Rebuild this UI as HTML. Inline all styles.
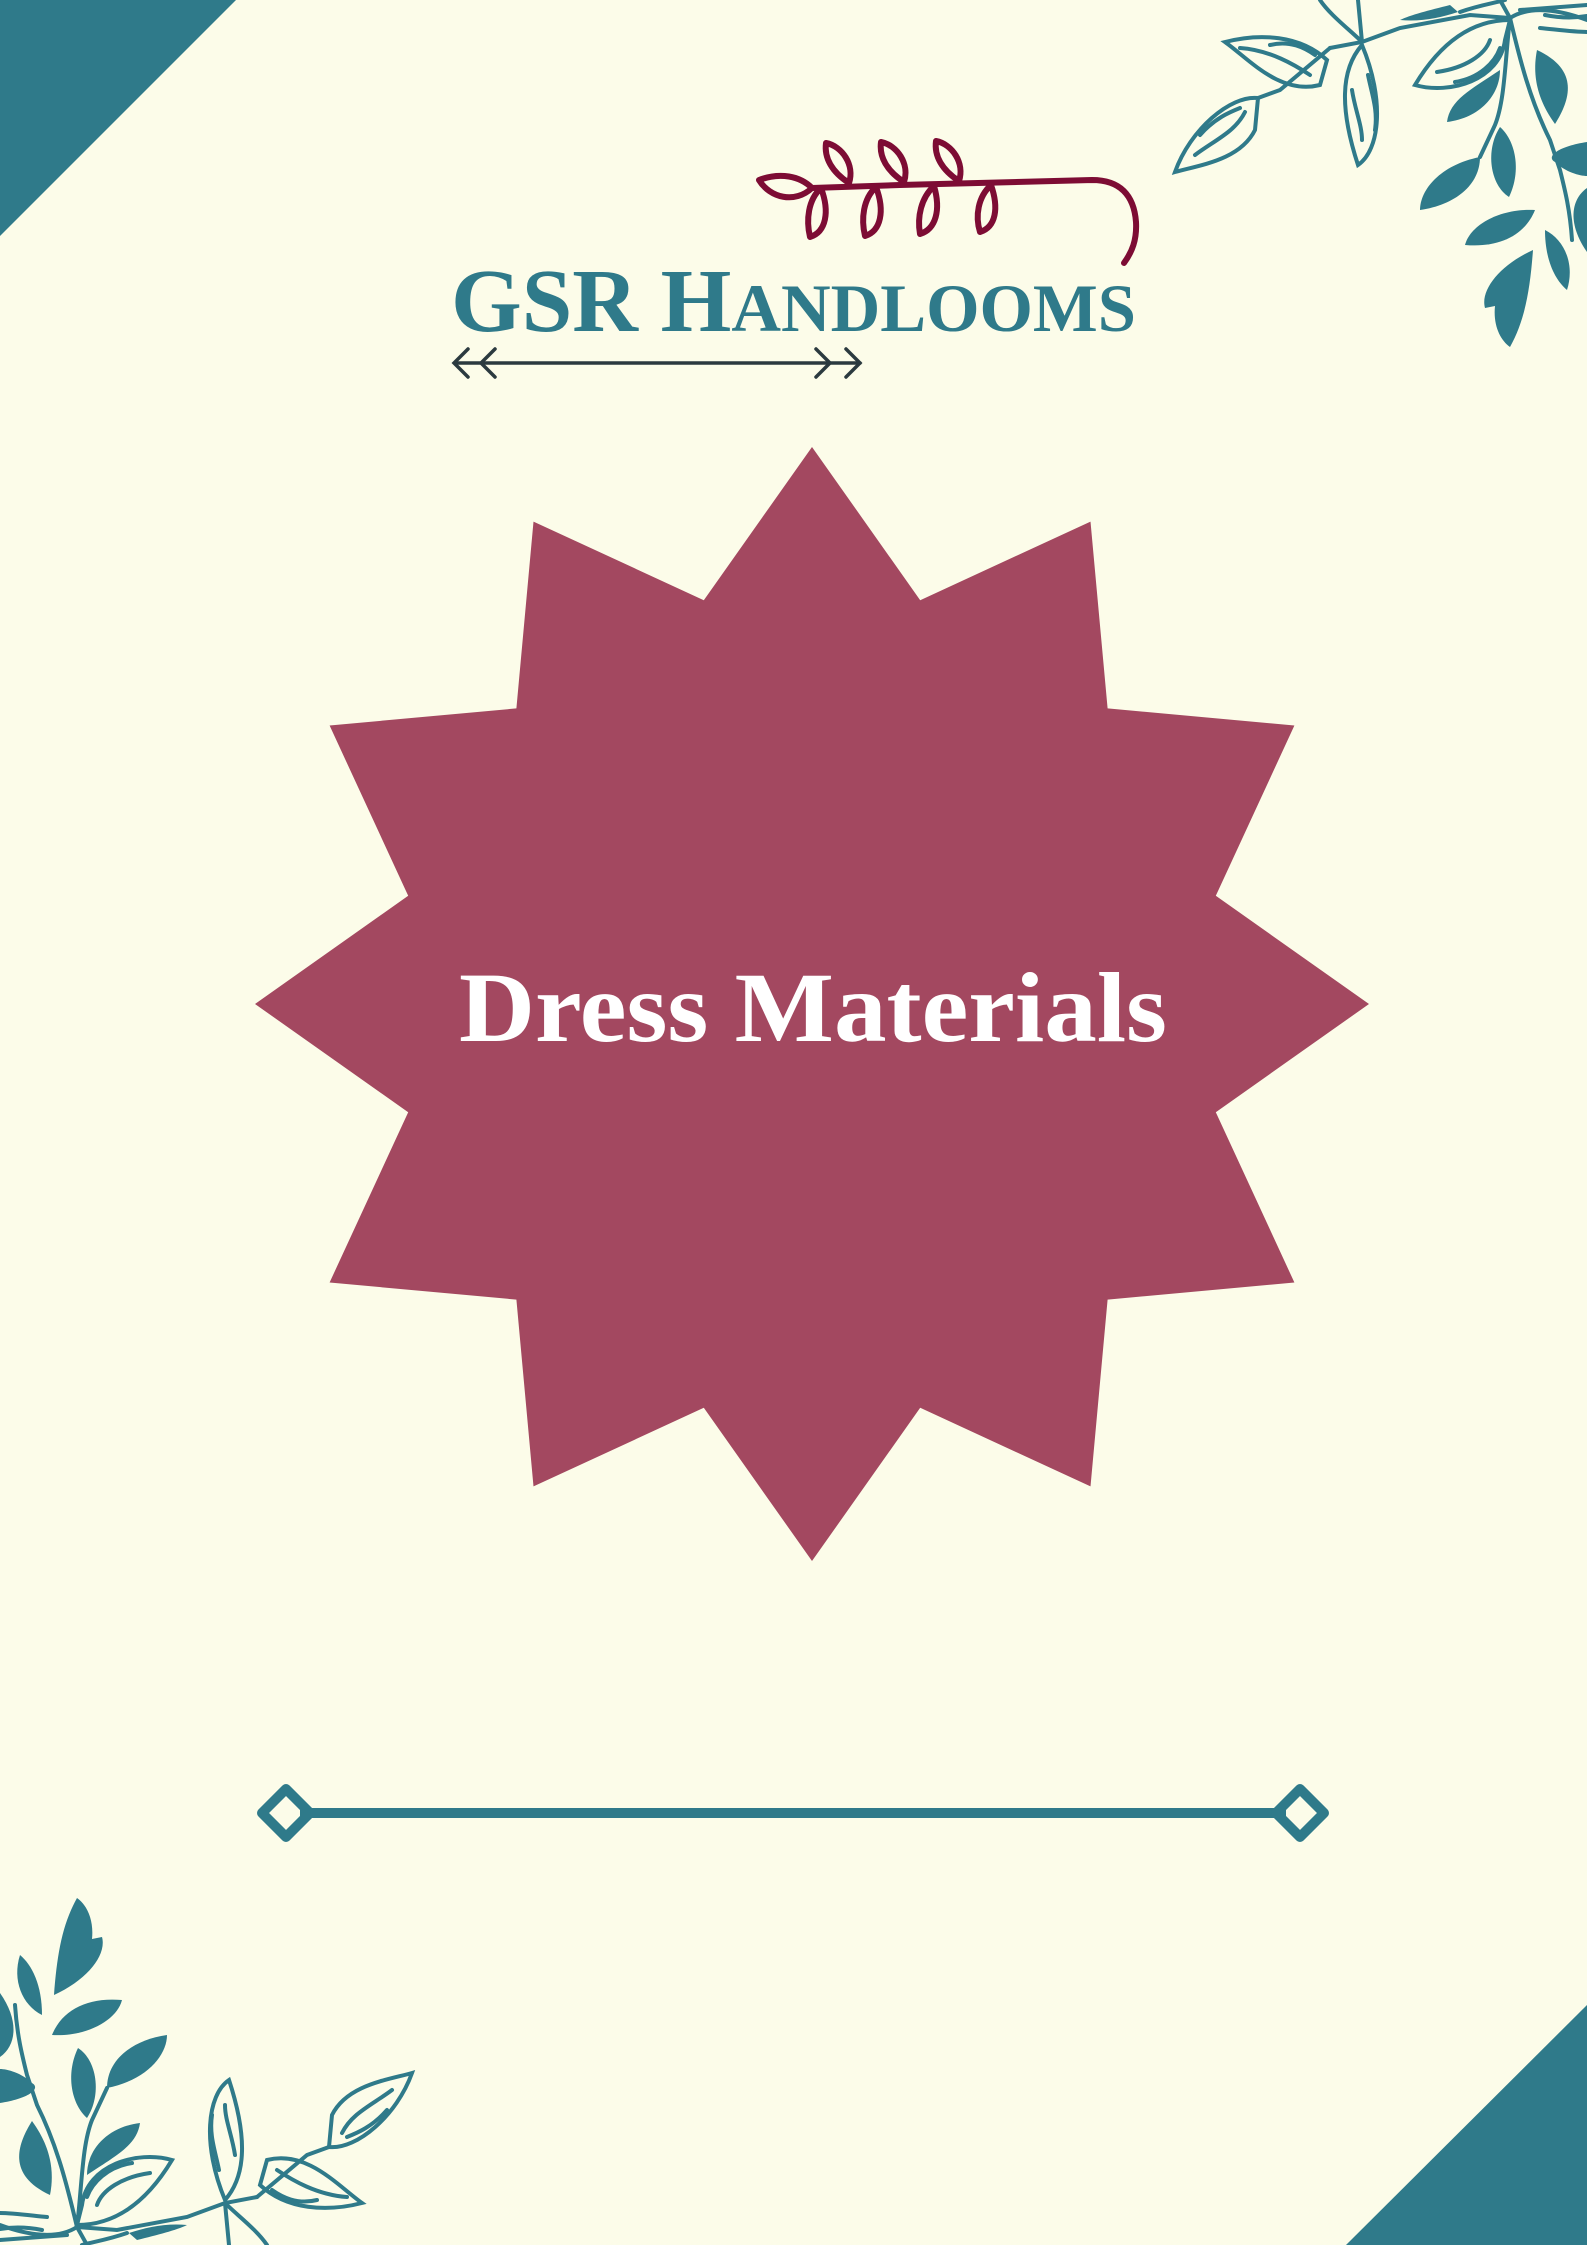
<!DOCTYPE html>
<html><head><meta charset="utf-8"><style>
html,body{margin:0;padding:0;background:#fcfce9;}
svg{display:block}
</style></head><body>
<svg width="1587" height="2245" viewBox="0 0 1587 2245" xmlns="http://www.w3.org/2000/svg">
<rect width="1587" height="2245" fill="#fcfce9"/>
<polygon points="0,0 236,0 0,236" fill="#2f7a8a"/>
<polygon points="1587,2005 1587,2245 1346,2245" fill="#2f7a8a"/>

<g id="leaves">
 <g fill="none" stroke="#2f7a8a" stroke-width="4" stroke-linecap="round">
  <path d="M1258,98 C1230,95 1190,130 1175,172 C1200,165 1240,160 1255,130 Z"/>
  <path d="M1195,155 C1215,140 1235,132 1245,112 M1200,135 C1215,118 1230,112 1240,108"/>
  <path d="M1258,98 L1280,90 L1330,48"/>
  <path d="M1327,60 C1300,35 1260,33 1225,42 C1250,60 1280,95 1320,85 Z"/>
  <path d="M1240,48 C1270,50 1295,65 1310,75 M1270,45 C1290,40 1305,48 1315,55"/>
  <path d="M1362,45 C1340,70 1340,110 1358,165 C1380,150 1385,100 1362,45 Z"/>
  <path d="M1352,90 C1355,110 1362,125 1362,140 M1368,75 C1372,95 1378,110 1375,130"/>
  <path d="M1330,48 L1362,42 L1400,28 L1470,15 L1510,18"/>
  <path d="M1362,42 C1350,30 1330,15 1320,0 M1362,42 L1358,0"/>
  <path d="M1510,20 C1460,20 1430,60 1415,85 C1450,95 1500,80 1505,40 Z"/>
  <path d="M1437,72 C1465,68 1485,55 1490,40 M1455,82 C1480,78 1495,62 1500,48"/>
  <path d="M1510,18 C1520,60 1530,100 1550,140 L1560,170 C1565,190 1570,210 1572,240 M1510,18 C1505,60 1505,100 1495,125 L1480,157"/>
  <path d="M1510,18 C1530,5 1560,10 1587,20 M1520,10 L1587,5 M1500,0 L1510,18 M1460,12 C1480,5 1495,3 1505,0"/>
  <path d="M1540,28 C1560,30 1575,32 1587,32 M1545,15 C1560,18 1575,18 1587,16"/>
 </g>
 <g fill="#2f7a8a">
  <path d="M1480,157 C1440,165 1420,190 1420,210 C1455,205 1480,185 1480,157 Z"/>
  <path d="M1500,127 C1485,150 1490,185 1509,197 C1522,170 1515,140 1500,127 Z"/>
  <path d="M1535,210 C1500,208 1470,225 1465,245 C1500,248 1525,235 1535,210 Z"/>
  <path d="M1545,230 C1545,260 1555,280 1567,290 C1575,265 1565,240 1545,230 Z"/>
  <path d="M1500,70 C1470,90 1450,100 1447,122 C1480,118 1500,95 1500,70 Z"/>
  <path d="M1537,50 C1530,85 1545,110 1555,124 C1570,100 1580,70 1537,50 Z"/>
  <path d="M1533,250 C1500,265 1480,290 1485,308 L1495,306 C1493,325 1500,340 1510,347 C1525,320 1530,290 1533,250 Z"/>
  <path d="M1587,142 C1560,146 1545,156 1555,162 C1565,172 1580,176 1587,176 Z"/>
  <path d="M1587,188 C1570,200 1568,225 1587,252 Z"/>
  <path d="M1450,5 C1430,10 1410,15 1400,20 C1420,22 1440,18 1458,12 Z"/>
 </g>
</g>
<use href="#leaves" transform="rotate(180 793.5 1122.5)"/>

<!-- maroon vine -->
<g fill="none" stroke="#7d0c34" stroke-width="6" stroke-linecap="round" stroke-linejoin="round">
 <path d="M812,188 L900,185 L1092,180 C1120,180 1134,195 1136,222 C1137,240 1132,252 1124,263"/>
 <path d="M812,188 C800,176 780,172 759,180 C770,198 795,204 812,188 Z"/>
 <path d="M849,183 C832,172 824,158 826,143 C842,146 855,165 849,183 Z"/>
 <path d="M904,182 C887,171 879,157 881,142 C897,145 910,164 904,182 Z"/>
 <path d="M959,181 C942,170 934,156 936,141 C952,144 965,163 959,181 Z"/>
 <path d="M821,188 C808,200 806,220 810,237 C826,232 830,212 821,188 Z"/>
 <path d="M876,187 C863,199 861,219 865,236 C881,231 885,211 876,187 Z"/>
 <path d="M934,186 C921,198 917,217 920,234 C936,229 941,210 934,186 Z"/>
 <path d="M991,185 C978,197 975,216 980,232 C996,227 999,208 991,185 Z"/>
</g>

<text x="451" y="331" textLength="685" lengthAdjust="spacingAndGlyphs" font-family="'Liberation Serif',serif" font-weight="bold" font-size="90" fill="#2f7a8a">GSR H<tspan font-size="68">ANDLOOMS</tspan></text>

<!-- arrow -->
<g fill="none" stroke="#2b3a3f" stroke-width="3.5" stroke-linecap="round">
 <path d="M456,363 L860,363"/>
 <path d="M468,349 L454,363 L468,377 M495,349 L481,363 L495,377"/>
 <path d="M816,349 L830,363 L816,377 M846,349 L860,363 L846,377"/>
</g>

<!-- star -->
<polygon fill="#a34860" points="812,447 920.2,600.2 1090.5,521.6 1107.6,708.4 1294.4,725.5 1215.8,895.8 1369,1004 1215.8,1112.2 1294.4,1282.5 1107.6,1299.6 1090.5,1486.4 920.2,1407.8 812,1561 703.8,1407.8 533.5,1486.4 516.4,1299.6 329.6,1282.5 408.2,1112.2 255,1004 408.2,895.8 329.6,725.5 516.4,708.4 533.5,521.6 703.8,600.2"/>
<text x="459" y="1041" textLength="708" lengthAdjust="spacingAndGlyphs" font-family="'Liberation Serif',serif" font-weight="bold" font-size="100" fill="#ffffff">Dress Materials</text>

<!-- bottom divider -->
<g fill="none" stroke="#2f7a8a" stroke-width="10" stroke-linejoin="round">
 <path d="M300,1813 L1286,1813"/>
 <path d="M286,1789 L310,1813 L286,1837 L262,1813 Z"/>
 <path d="M1300,1789 L1324,1813 L1300,1837 L1276,1813 Z"/>
</g>
</svg>
</body></html>
